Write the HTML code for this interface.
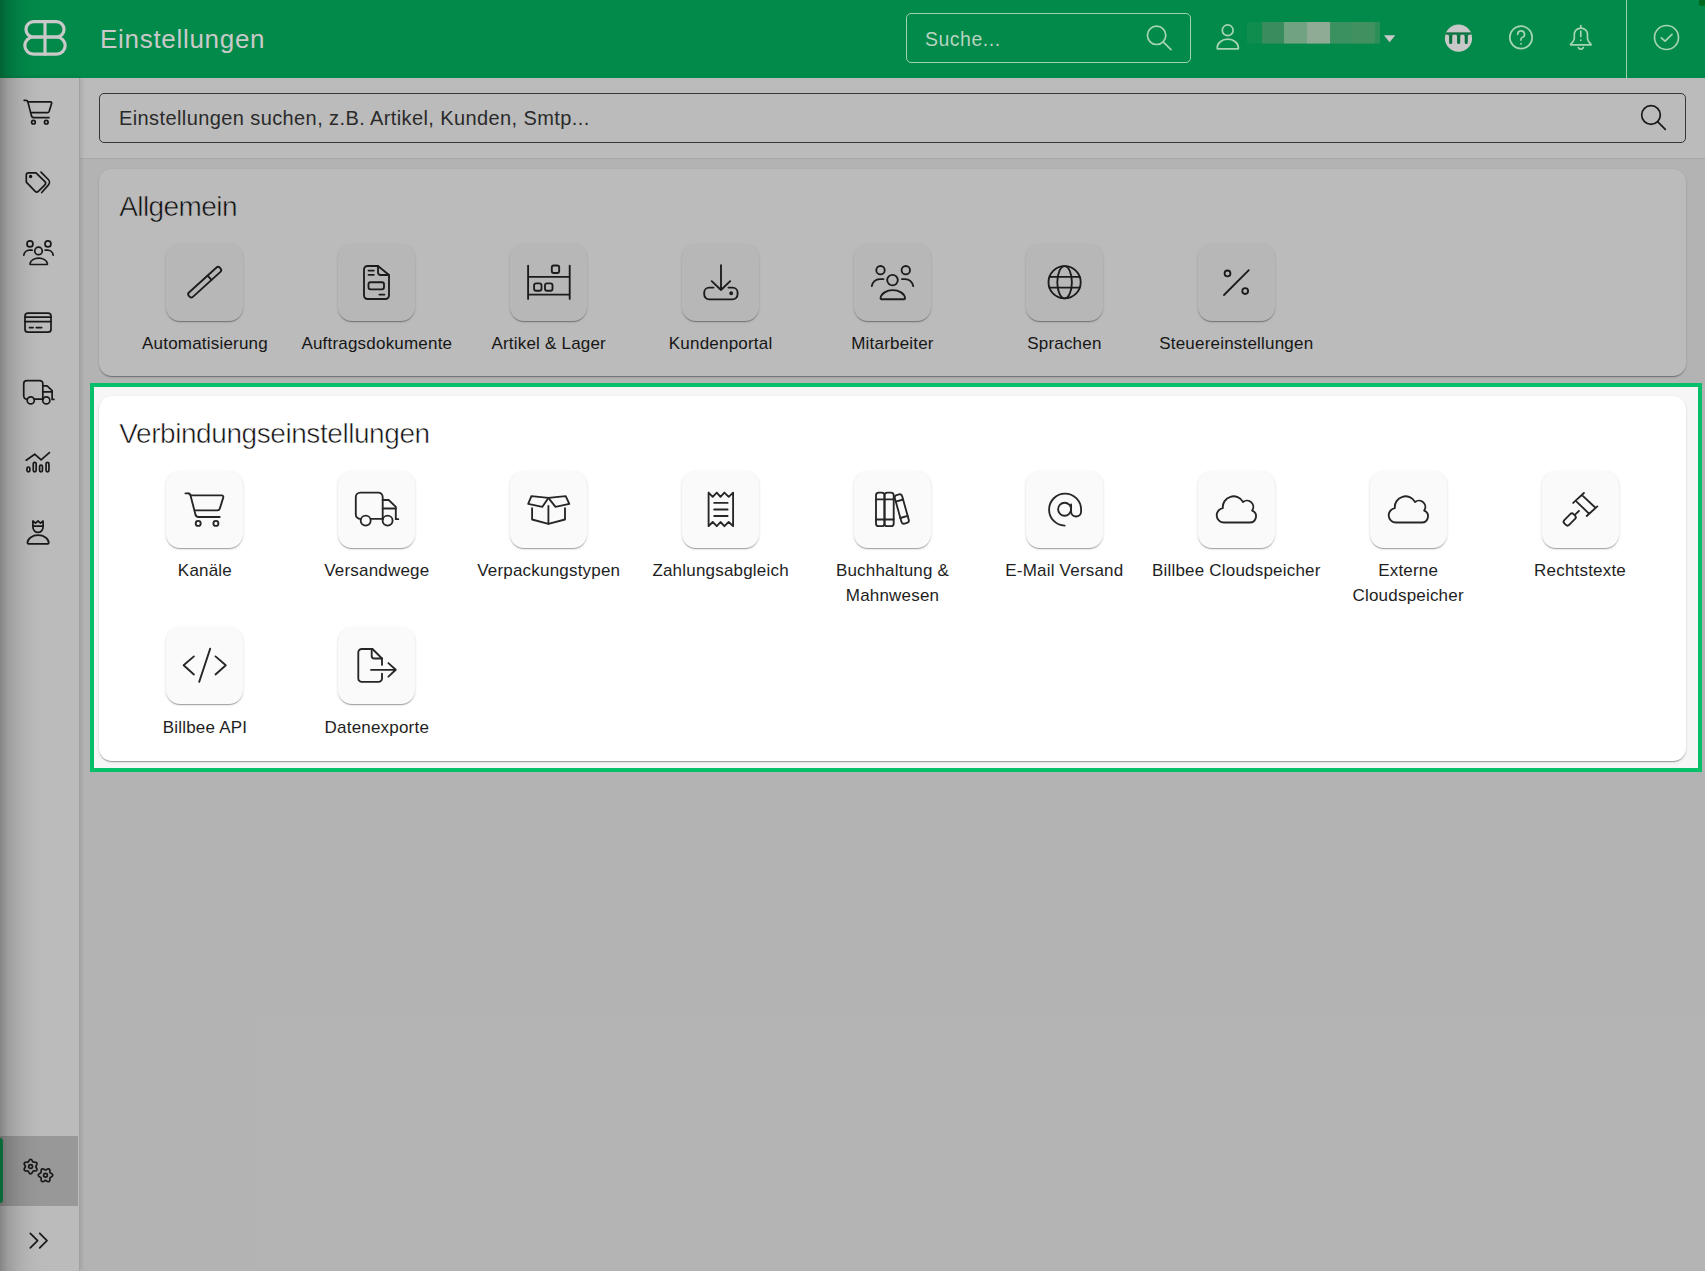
<!DOCTYPE html>
<html><head><meta charset="utf-8">
<style>
*{box-sizing:border-box;margin:0;padding:0}
html,body{width:1705px;height:1271px;overflow:hidden}
body{position:relative;background:#f5f5f5;font-family:"Liberation Sans",sans-serif;color:#222}
.abs{position:absolute}
#hdr{left:0;top:0;width:1705px;height:78px;background:#04bd66}
#side{left:0;top:78px;width:80px;height:1193px;background:#fff;border-right:1px solid #dcdcdc;box-shadow:1px 0 5px rgba(0,0,0,.13)}
#shadow{left:0;top:0;width:44px;height:1271px;background:linear-gradient(90deg,rgba(0,0,0,.29) 0,rgba(0,0,0,.16) 8px,rgba(0,0,0,.07) 20px,rgba(0,0,0,.02) 32px,rgba(0,0,0,0) 44px)}
#active{left:0;top:1136px;width:78px;height:70px;background:#d0d0d0}
#ind{left:0;top:1138px;width:3px;height:65px;background:#14c46c;border-radius:0 3px 3px 0}
#sbar{left:80px;top:78px;width:1625px;height:81px;background:#fff;border-bottom:1px solid #e6e6e6}
#sinput{left:99px;top:93px;width:1587px;height:50px;border:1px solid #4a4a4a;border-radius:5px}
#ph{left:119px;top:106.3px;font-size:20px;line-height:24px;letter-spacing:0.4px;color:#3a3a3a;white-space:nowrap}
.card{background:#fff;border-radius:13px;box-shadow:0 2px 1px -1px rgba(0,0,0,.2),0 1px 1px 0 rgba(0,0,0,.14),0 1px 3px 0 rgba(0,0,0,.12)}
.tile{position:absolute;width:77px;height:77px;border-radius:14px;background:#fafafa;box-shadow:0 2px 1px -1px rgba(0,0,0,.2),0 1px 1px 0 rgba(0,0,0,.14),0 1px 3px 0 rgba(0,0,0,.12)}
.tile svg{position:absolute;left:0;top:0;width:77px;height:77px;fill:none;stroke:#262626;stroke-width:1.85;stroke-linecap:round;stroke-linejoin:round}
.lbl{position:absolute;width:172px;text-align:center;font-size:17px;line-height:25px;letter-spacing:0.2px;color:#1e1e1e;white-space:nowrap}
.title{position:absolute;font-size:28px;line-height:32px;color:#111;letter-spacing:-0.6px;-webkit-text-stroke:0.55px #fff;white-space:nowrap}
#overlay{left:0;top:0;width:1705px;height:1271px;background:rgba(0,0,0,.265)}
#frame{left:90px;top:383px;width:1612px;height:389px;border:4px solid #06bf69;background:#f6f6f6}
#htitle{left:100px;top:23.5px;font-size:26px;line-height:30px;letter-spacing:0.7px;color:#c9c9c9;white-space:nowrap}
#hsearch{left:906px;top:13px;width:285px;height:50px;border:1.3px solid #a0d2b0;border-radius:5px}
#hph{left:925px;top:27px;font-size:19.5px;line-height:24px;color:#b8d3c0;white-space:nowrap;letter-spacing:0.5px}
#divider{left:1626px;top:0;width:1px;height:78px;background:#98d0aa}
svg.page{position:absolute;left:0;top:0;width:1705px;height:1271px;fill:none;stroke-linecap:round;stroke-linejoin:round}
</style></head><body>

<div id="hdr" class="abs"></div>
<div id="sbar" class="abs"></div>
<div id="sinput" class="abs"></div>
<div id="ph" class="abs">Einstellungen suchen, z.B. Artikel, Kunden, Smtp...</div>
<div id="side" class="abs"></div>
<div id="active" class="abs"></div>
<div id="ind" class="abs"></div>


<svg class="page" viewBox="0 0 1705 1271">
 <g stroke="#222" stroke-width="1.7">
 
<g transform="translate(10.1 84.2) scale(0.725)" stroke-width="2.35"><path d="M19.4 22.3h2.2a3 3 0 0 1 3 2.4l4.7 18.3a3.5 3.5 0 0 0 3.4 3h21"/><path d="M24.8 24.4h31a1.6 1.6 0 0 1 1.5 2l-3.5 11.2a2.5 2.5 0 0 1 -2.4 1.7h-22.4"/><circle cx="32.2" cy="52.4" r="2.5"/><circle cx="49.9" cy="52.4" r="2.5"/></g>
<path d="M26.3 182.1V175a2.2 2.2 0 0 1 2.2-2.2H36L44.9 181.7a2.2 2.2 0 0 1 0 3.1L38.3 191.3a2.2 2.2 0 0 1-3.1 0z"/>
<circle cx="30.6" cy="176.6" r="0.9" fill="#222"/>
<path d="M41 172.2L48.3 179.5a4 4 0 0 1 0 5.6L41.7 192.5"/>
<g transform="translate(11.17 225.3) scale(0.71)" stroke-width="2.4"><circle cx="26.5" cy="26.2" r="4.2"/><circle cx="51.8" cy="26.2" r="4.2"/><circle cx="38.5" cy="36.1" r="5.3"/><path d="M17.8 42.1a8 8 0 0 1 8 -7h3.7"/><path d="M59.2 42.1a8 8 0 0 0 -8 -7h-3.3"/><path d="M27.5 55.2h22.6a1 1 0 0 0 1 -1.2a12.4 9 0 0 0 -24.6 0a1 1 0 0 0 1 1.2z"/></g>
<rect x="25" y="313.1" width="26" height="19.1" rx="3"/>
<path d="M25 317.2h26M25 321.7h26M29.5 327.6h3.6M36.3 327.6h5.4"/>
<g transform="translate(11.08 365.2) scale(0.71)" stroke-width="2.4"><path d="M22.5 47.9a4.5 4.5 0 0 1 -4.7 -4.5v-17.3a4.5 4.5 0 0 1 4.5 -4.5h18a4.3 4.3 0 0 1 4.4 4.3v22.3"/><path d="M32.7 47.9h12"/><path d="M44.7 29h6l7.1 6.8v12.4h2.5"/><path d="M44.7 37.5h13.1"/><circle cx="27.7" cy="49.6" r="5"/><circle cx="49.6" cy="49.6" r="5"/></g>
<path d="M26.2 460.2L34.7 454.2L41.1 459.8L49.4 452.6"/>
<rect x="26.95" y="467" width="2.9" height="4.8" rx="1.45"/>
<rect x="33.25" y="462.3" width="2.9" height="9.5" rx="1.45"/>
<rect x="39.55" y="465.1" width="2.9" height="6.7" rx="1.45"/>
<rect x="46.05" y="462.3" width="2.9" height="9.5" rx="1.45"/>
<path d="M32.9 521V527a5 5.3 0 0 0 10.2 0V521l-2.6 2.1l-2.5-2.2l-2.5 2.2z"/>
<path d="M32.9 526.2H43.1"/>
<path d="M28.4 543.9h19.4a.9.9 0 0 0 .9-1.1A10.2 7.3 0 0 0 27.5 542.8a.9.9 0 0 0 .9 1.1z"/>
<path d="M35.80 1166.60 L35.86 1166.95 L36.05 1167.32 L36.31 1167.73 L36.59 1168.20 L36.83 1168.72 L36.98 1169.24 L36.99 1169.75 L36.84 1170.20 L36.52 1170.56 L36.08 1170.80 L35.55 1170.94 L34.98 1170.98 L34.44 1170.97 L33.94 1170.96 L33.53 1170.99 L33.20 1171.10 L32.93 1171.33 L32.70 1171.67 L32.47 1172.11 L32.20 1172.59 L31.88 1173.06 L31.50 1173.45 L31.07 1173.71 L30.60 1173.80 L30.13 1173.71 L29.70 1173.45 L29.32 1173.06 L29.00 1172.59 L28.73 1172.11 L28.50 1171.67 L28.27 1171.33 L28.00 1171.10 L27.67 1170.99 L27.26 1170.96 L26.76 1170.97 L26.22 1170.98 L25.65 1170.94 L25.12 1170.80 L24.68 1170.56 L24.36 1170.20 L24.21 1169.75 L24.22 1169.24 L24.37 1168.72 L24.61 1168.20 L24.89 1167.73 L25.15 1167.32 L25.34 1166.95 L25.40 1166.60 L25.34 1166.25 L25.15 1165.88 L24.89 1165.47 L24.61 1165.00 L24.37 1164.48 L24.22 1163.96 L24.21 1163.45 L24.36 1163.00 L24.68 1162.64 L25.12 1162.40 L25.65 1162.26 L26.22 1162.22 L26.76 1162.23 L27.26 1162.24 L27.67 1162.21 L28.00 1162.10 L28.27 1161.87 L28.50 1161.53 L28.73 1161.09 L29.00 1160.61 L29.32 1160.14 L29.70 1159.75 L30.13 1159.49 L30.60 1159.40 L31.07 1159.49 L31.50 1159.75 L31.88 1160.14 L32.20 1160.61 L32.47 1161.09 L32.70 1161.53 L32.93 1161.87 L33.20 1162.10 L33.53 1162.21 L33.94 1162.24 L34.44 1162.23 L34.98 1162.22 L35.55 1162.26 L36.08 1162.40 L36.52 1162.64 L36.84 1163.00 L36.99 1163.45 L36.98 1163.96 L36.83 1164.48 L36.59 1165.00 L36.31 1165.47 L36.05 1165.88 L35.86 1166.25Z"/>
<circle cx="30.6" cy="1166.6" r="1.9"/>
<path d="M52.70 1175.20 L52.61 1175.67 L52.35 1176.10 L51.96 1176.48 L51.49 1176.80 L51.01 1177.07 L50.57 1177.30 L50.23 1177.53 L50.00 1177.80 L49.89 1178.13 L49.86 1178.54 L49.87 1179.04 L49.88 1179.58 L49.84 1180.15 L49.70 1180.68 L49.46 1181.12 L49.10 1181.44 L48.65 1181.59 L48.14 1181.58 L47.62 1181.43 L47.10 1181.19 L46.63 1180.91 L46.22 1180.65 L45.85 1180.46 L45.50 1180.40 L45.15 1180.46 L44.78 1180.65 L44.37 1180.91 L43.90 1181.19 L43.38 1181.43 L42.86 1181.58 L42.35 1181.59 L41.90 1181.44 L41.54 1181.12 L41.30 1180.68 L41.16 1180.15 L41.12 1179.58 L41.13 1179.04 L41.14 1178.54 L41.11 1178.13 L41.00 1177.80 L40.77 1177.53 L40.43 1177.30 L39.99 1177.07 L39.51 1176.80 L39.04 1176.48 L38.65 1176.10 L38.39 1175.67 L38.30 1175.20 L38.39 1174.73 L38.65 1174.30 L39.04 1173.92 L39.51 1173.60 L39.99 1173.33 L40.43 1173.10 L40.77 1172.87 L41.00 1172.60 L41.11 1172.27 L41.14 1171.86 L41.13 1171.36 L41.12 1170.82 L41.16 1170.25 L41.30 1169.72 L41.54 1169.28 L41.90 1168.96 L42.35 1168.81 L42.86 1168.82 L43.38 1168.97 L43.90 1169.21 L44.37 1169.49 L44.78 1169.75 L45.15 1169.94 L45.50 1170.00 L45.85 1169.94 L46.22 1169.75 L46.63 1169.49 L47.10 1169.21 L47.62 1168.97 L48.14 1168.82 L48.65 1168.81 L49.10 1168.96 L49.46 1169.28 L49.70 1169.72 L49.84 1170.25 L49.88 1170.82 L49.87 1171.36 L49.86 1171.86 L49.89 1172.27 L50.00 1172.60 L50.23 1172.87 L50.57 1173.10 L51.01 1173.33 L51.49 1173.60 L51.96 1173.92 L52.35 1174.30 L52.61 1174.73Z"/>
<circle cx="45.5" cy="1175.2" r="1.9"/>
<path d="M30.3 1233.3L37.6 1240.6L30.3 1247.9M39.7 1233.3L47 1240.6L39.7 1247.9"/>

  <circle cx="1651" cy="115" r="9.3"/>
  <path d="M1657.6 121.6L1665.3 129.3"/>
 </g>
</svg>

<div id="card1" class="abs card" style="left:99px;top:168.7px;width:1587px;height:207.8px"></div>
<div class="title" style="left:119.3px;top:190.8px">Allgemein</div>
<div class="tile" style="left:166.44px;top:244.3px"><svg viewBox="0 0 77 77"><g transform="rotate(-42.2 38.7 38.2)"><rect x="17.8" y="35.3" width="41.8" height="5.8" rx="2.3"/><line x1="45.2" y1="35.3" x2="45.2" y2="41.1"/></g></svg></div><div class="lbl" style="left:118.94px;top:330.5px">Automatisierung</div><div class="tile" style="left:338.33px;top:244.3px"><svg viewBox="0 0 77 77"><path d="M40 22v6.5a2.5 2.5 0 0 0 2.5 2.5h8"/><path d="M47.5 55h-18a3.5 3.5 0 0 1 -3.5 -3.5v-26a3.5 3.5 0 0 1 3.5 -3.5h10.5l11 9v20.5a3.5 3.5 0 0 1 -3.5 3.5z"/><path d="M30.5 26.6h5.3M30.5 30.8h5.3M41.4 50.6h5"/><rect x="30.5" y="38.2" width="15.5" height="7.1" rx="2"/></svg></div><div class="lbl" style="left:290.83px;top:330.5px">Auftragsdokumente</div><div class="tile" style="left:510.22px;top:244.3px"><svg viewBox="0 0 77 77"><path d="M18.1 21.6v33.3M59.7 21.6v33.3M18.1 32.9h41.6M18.1 50.6h41.6"/><rect x="41.8" y="21.5" width="7.4" height="7.5" rx="2"/><rect x="24.1" y="39.3" width="7.4" height="7.4" rx="2"/><rect x="35" y="39.3" width="7.5" height="7.4" rx="2"/></svg></div><div class="lbl" style="left:462.72px;top:330.5px">Artikel &amp; Lager</div><div class="tile" style="left:682.11px;top:244.3px"><svg viewBox="0 0 77 77"><path d="M39 21.2v24.8M29.7 37.2l9.3 8.8l9.2 -8.8"/><path d="M31.5 43.6h-4.3a5 5 0 0 0 -5 5v1.7a5 5 0 0 0 5 5h23.4a5 5 0 0 0 5 -5v-1.7a5 5 0 0 0 -5 -5h-4.2"/><circle cx="49.2" cy="49.2" r="1" fill="#222"/></svg></div><div class="lbl" style="left:634.61px;top:330.5px">Kundenportal</div><div class="tile" style="left:854.00px;top:244.3px"><svg viewBox="0 0 77 77"><circle cx="26.5" cy="26.2" r="4.2"/><circle cx="51.8" cy="26.2" r="4.2"/><circle cx="38.5" cy="36.1" r="5.3"/><path d="M17.8 42.1a8 8 0 0 1 8 -7h3.7"/><path d="M59.2 42.1a8 8 0 0 0 -8 -7h-3.3"/><path d="M27.5 55.2h22.6a1 1 0 0 0 1 -1.2a12.4 9 0 0 0 -24.6 0a1 1 0 0 0 1 1.2z"/></svg></div><div class="lbl" style="left:806.50px;top:330.5px">Mitarbeiter</div><div class="tile" style="left:1025.89px;top:244.3px"><svg viewBox="0 0 77 77"><circle cx="38.6" cy="38.2" r="16.1"/><ellipse cx="38.6" cy="38.2" rx="7.3" ry="16.1"/><path d="M23.5 32.9h30.2M23.5 43.6h30.2"/></svg></div><div class="lbl" style="left:978.39px;top:330.5px">Sprachen</div><div class="tile" style="left:1197.78px;top:244.3px"><svg viewBox="0 0 77 77"><circle cx="29.5" cy="29.4" r="2.9"/><circle cx="47.2" cy="47.1" r="2.9"/><path d="M26 51l24.8 -24.8"/></svg></div><div class="lbl" style="left:1150.28px;top:330.5px">Steuereinstellungen</div>

<div id="overlay" class="abs"></div>
<div id="shadow" class="abs"></div>

<svg class="page" viewBox="0 0 1705 1271">
 <rect x="1247" y="22" width="15" height="21.6" fill="#0f8d4f"/>
 <rect x="1262" y="22" width="22" height="21.6" fill="#3a8c5e"/>
 <rect x="1284" y="22" width="23" height="21.6" fill="#6fa382"/>
 <rect x="1307" y="22" width="23" height="21.6" fill="#8fab95"/>
 <rect x="1330" y="22" width="23" height="21.6" fill="#3b915f"/>
 <rect x="1353" y="22" width="22" height="21.6" fill="#40915f"/>
 <rect x="1375" y="22" width="5" height="21.6" fill="#2c8f58"/>
 <rect x="1699" y="0" width="6" height="5.7" fill="#006b1e"/>
 <g stroke="#c9c9c9" stroke-width="3.2">
  <rect x="26" y="21.7" width="38" height="15.3" rx="7.6"/>
  <rect x="24.8" y="37" width="40.4" height="17.2" rx="8.6"/>
  <path d="M45 21.7V54.2"/>
 </g>
 <g stroke="#a6d4b4" stroke-width="1.7">
  <circle cx="1156.6" cy="35.3" r="9.2"/>
  <path d="M1163.1 41.8L1171 49.6"/>
  <circle cx="1227.7" cy="30.3" r="5.4"/>
  <path d="M1218 48.9h19.6a.8.8 0 0 0 .8-1a10.5 8.6 0 0 0-21.2 0a.8.8 0 0 0 .8 1z"/>
  <circle cx="1521" cy="37.4" r="11.2"/>
  <path d="M1517.7 34.3a3.4 3.4 0 1 1 4.6 3.2a1.6 1.6 0 0 0-1.3 1.6v1"/>
  <path d="M1521 43.6v.2"/>
  <path d="M1580.8 25.7V27.8M1574.3 38.7V34.6a6.6 6.6 0 0 1 13.2 0V38.7a8.5 8.5 0 0 0 3.5 5.6a.3.3 0 0 1-.2.5H1570.8a.3.3 0 0 1-.2-.5a8.5 8.5 0 0 0 3.7-5.6M1578.4 47.5a2.5 2 0 0 0 4.9 0M1580.8 31.2V36.4M1580.8 40V40.2"/>
  <circle cx="1666.5" cy="37.5" r="12"/>
  <path d="M1661.3 37.8L1665.1 41.2L1672 34.3"/>
 </g>
 <path d="M1384 35.2H1395.3L1389.6 42.2z" fill="#c8c8c8"/>
 <circle cx="1458.5" cy="38.2" r="13.6" fill="#c8c8c8"/>
 <defs><clipPath id="mc"><circle cx="1458.5" cy="38.2" r="13.6"/></clipPath></defs>
 <g clip-path="url(#mc)" fill="#05703c">
 <rect x="1444" y="32.4" width="29" height="2.2"/>
 <path d="M1449.1 34.5h3.1v8a1.55 1.55 0 0 1-3.1 0z M1447.6 34.5h6.1a2.5 2 0 0 0-1.5 1.6h-3.1a2.5 2 0 0 0-1.5-1.6z"/>
 <path d="M1457.1 34.5h3.1v8a1.55 1.55 0 0 1-3.1 0z M1455.6 34.5h6.1a2.5 2 0 0 0-1.5 1.6h-3.1a2.5 2 0 0 0-1.5-1.6z"/>
 <path d="M1464.7 34.5h3.1v8a1.55 1.55 0 0 1-3.1 0z M1463.2 34.5h6.1a2.5 2 0 0 0-1.5 1.6h-3.1a2.5 2 0 0 0-1.5-1.6z"/>
 </g>

</svg>

<div id="htitle" class="abs">Einstellungen</div>
<div id="hsearch" class="abs"></div>
<div id="hph" class="abs">Suche...</div>
<div id="divider" class="abs"></div>
<div id="frame" class="abs"></div>
<div id="card2" class="abs card" style="left:99px;top:395.8px;width:1587px;height:364.9px"></div>
<div class="title" style="left:119.3px;top:417.8px;letter-spacing:-0.43px">Verbindungseinstellungen</div>
<div class="tile" style="left:166.44px;top:470.5px"><svg viewBox="0 0 77 77"><path d="M19.4 22.3h2.2a3 3 0 0 1 3 2.4l4.7 18.3a3.5 3.5 0 0 0 3.4 3h21"/><path d="M24.8 24.4h31a1.6 1.6 0 0 1 1.5 2l-3.5 11.2a2.5 2.5 0 0 1 -2.4 1.7h-22.4"/><circle cx="32.2" cy="52.4" r="2.5"/><circle cx="49.9" cy="52.4" r="2.5"/></svg></div><div class="lbl" style="left:118.94px;top:557.7px">Kanäle</div><div class="tile" style="left:338.33px;top:470.5px"><svg viewBox="0 0 77 77"><path d="M22.5 47.9a4.5 4.5 0 0 1 -4.7 -4.5v-17.3a4.5 4.5 0 0 1 4.5 -4.5h18a4.3 4.3 0 0 1 4.4 4.3v22.3"/><path d="M32.7 47.9h12"/><path d="M44.7 29h6l7.1 6.8v12.4h2.5"/><path d="M44.7 37.5h13.1"/><circle cx="27.7" cy="49.6" r="5"/><circle cx="49.6" cy="49.6" r="5"/></svg></div><div class="lbl" style="left:290.83px;top:557.7px">Versandwege</div><div class="tile" style="left:510.22px;top:470.5px"><svg viewBox="0 0 77 77"><path d="M21.4 25.1l17 1.8l-6 8.9l-14.2 -2.9z"/><path d="M55.7 25.1l-17.3 1.8l7.1 8.9l13.8 -2.9z"/><path d="M22.1 37.2v11.3l16.3 4.3l16.6 -4.3v-11.3"/><path d="M38.4 35v17.8"/></svg></div><div class="lbl" style="left:462.72px;top:557.7px">Verpackungstypen</div><div class="tile" style="left:682.11px;top:470.5px"><svg viewBox="0 0 77 77"><path d="M26.6 21.6v33.6l4.1 -4.2l4.1 4.2l3.7 -4.2l3.9 4.2l4.3 -4.2l4.4 4.2v-33.6l-4.4 4.2l-4.3 -4.2l-3.9 4.2l-3.7 -4.2l-4.1 4.2z"/><path d="M32.2 31.9h13.4M32.2 38.5h13.4M32.2 45h13.4"/></svg></div><div class="lbl" style="left:634.61px;top:557.7px">Zahlungsabgleich</div><div class="tile" style="left:854.00px;top:470.5px"><svg viewBox="0 0 77 77"><rect x="22" y="21.6" width="8.5" height="33.6" rx="2.8"/><rect x="30.5" y="21.6" width="9.2" height="33.6" rx="2.8"/><path d="M22 28.3h17.7M22 48.5h17.7"/><g transform="rotate(-15.5 47.8 38)"><rect x="44" y="23.2" width="7.6" height="29.6" rx="2.5"/><path d="M44 29.2h7.6M44 46.3h7.6"/></g></svg></div><div class="lbl" style="left:806.50px;top:557.7px">Buchhaltung &amp;<br>Mahnwesen</div><div class="tile" style="left:1025.89px;top:470.5px"><svg viewBox="0 0 77 77"><circle cx="38.6" cy="38.2" r="6.5"/><path d="M45.1 33.3v7.2a5 5 0 0 0 10 0v-2.3a16 16 0 1 0 -16.5 16.4"/></svg></div><div class="lbl" style="left:978.39px;top:557.7px">E-Mail Versand</div><div class="tile" style="left:1197.78px;top:470.5px"><svg viewBox="0 0 77 77"><path d="M25.9 51.5A7.2 7.2 0 0 1 24.85 37.18A10.8 10.8 0 0 1 45.10 30.96A6.3 6.3 0 0 1 54.13 39.56A6.2 6.2 0 0 1 51.8 51.5Z"/></svg></div><div class="lbl" style="left:1150.28px;top:557.7px">Billbee Cloudspeicher</div><div class="tile" style="left:1369.67px;top:470.5px"><svg viewBox="0 0 77 77"><path d="M25.9 51.5A7.2 7.2 0 0 1 24.85 37.18A10.8 10.8 0 0 1 45.10 30.96A6.3 6.3 0 0 1 54.13 39.56A6.2 6.2 0 0 1 51.8 51.5Z"/></svg></div><div class="lbl" style="left:1322.17px;top:557.7px">Externe<br>Cloudspeicher</div><div class="tile" style="left:1541.56px;top:470.5px"><svg viewBox="0 0 77 77"><path d="M31.2 31.9l10.7 -9.9M44.7 45l10.6 -9.6M34.8 30.8l12.4 12M40.8 24.8l12.4 11.7M36.9 40l-3.3 3.2"/><g transform="rotate(-45 27.7 48.5)"><rect x="21.2" y="45.1" width="13" height="6.8" rx="2.3"/></g></svg></div><div class="lbl" style="left:1494.06px;top:557.7px">Rechtstexte</div>
<div class="tile" style="left:166.44px;top:627.3px"><svg viewBox="0 0 77 77"><path d="M27.9 29.4l-10.3 8.8l10.3 9.3M49.5 29.4l10.3 8.8l-10.3 9.3M44.2 21.6l-11 33.3"/></svg></div><div class="lbl" style="left:118.94px;top:714.5px">Billbee API</div><div class="tile" style="left:338.33px;top:627.3px"><svg viewBox="0 0 77 77"><path d="M33.7 22v7a2.5 2.5 0 0 0 2.5 2.5h7.8"/><path d="M44 37.9v-6.4l-9.5 -9.5h-10.7a3.5 3.5 0 0 0 -3.5 3.5v25.9a3.5 3.5 0 0 0 3.5 3.5h16.7a3.5 3.5 0 0 0 3.5 -3.5v-4.7"/><path d="M33 42.8h24.8M50.4 36.1l7.4 6.7l-7.4 6.8"/></svg></div><div class="lbl" style="left:290.83px;top:714.5px">Datenexporte</div>

</body></html>
